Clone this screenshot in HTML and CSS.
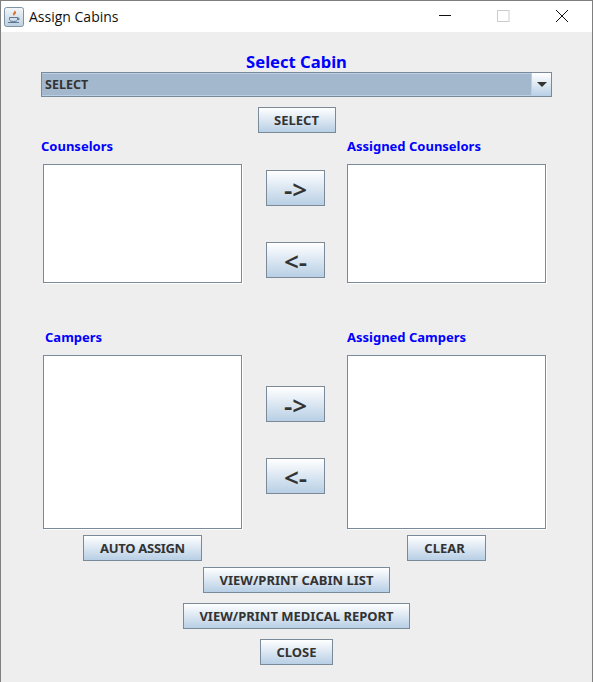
FILE: index.html
```html
<!DOCTYPE html>
<html lang="en">
<head>
<meta charset="utf-8">
<title>Assign Cabins</title>
<link rel="stylesheet" href="styles.css">
</head>
<body>
<div class="window">
  <header class="titlebar">
    <svg class="app-icon" width="20" height="20" viewBox="0 0 20 20">
      <defs><linearGradient id="ig" x1="0" y1="0" x2="0" y2="1"><stop offset="0" stop-color="#f4f7fa"/><stop offset="1" stop-color="#bccfe0"/></linearGradient></defs>
      <rect x=".5" y=".5" width="19" height="19" rx="2" fill="url(#ig)" stroke="#7d93a6"/>
      <path d="M10.500 3c1 1.500-2 2.500-1.500 4.500.2.700.7 1 1 1.500-.2-1.200 2.800-2 2-4-.3-.7-1-1.300-1.500-2z" fill="#e2762a"/>
      <path d="M5.500 10.500h8v1.800c0 1.500-1.500 2.200-4 2.200s-4-.7-4-2.200z" fill="none" stroke="#5c7a92" stroke-width="1"/>
      <path d="M13.500 11h1.500v1.500h-1.500M4 15.500h11" fill="none" stroke="#5c7a92" stroke-width="1"/>
    </svg>
    <span class="title">Assign Cabins</span>
    <div class="controls">
      <svg class="ctl" width="58" height="32" viewBox="0 0 58 32"><path d="M23 15.500h12" stroke="#111" fill="none"/></svg>
      <svg class="ctl" width="58" height="32" viewBox="0 0 58 32"><rect x="23.500" y="10.500" width="11.500" height="11" fill="none" stroke="#ccc"/></svg>
      <svg class="ctl" width="58" height="32" viewBox="0 0 58 32"><path d="M24 10l12 12M36 10l-12 12" stroke="#111" fill="none"/></svg>
    </div>
  </header>
  <main class="content">
    <h1 class="heading">Select Cabin</h1>
    <div class="combo">
      <div class="combo-value">SELECT</div>
      <div class="combo-arrow"><span class="triangle"></span></div>
    </div>
    <div class="center-row select-row"><button class="btn btn-select">SELECT</button></div>

    <section class="transfer transfer-top">
      <div class="label label-left">Counselors</div>
      <div class="label label-right">Assigned Counselors</div>
      <div class="list list-short"></div>
      <div class="arrows arrows-top">
        <button class="btn btn-arrow">-&gt;</button>
        <button class="btn btn-arrow">&lt;-</button>
      </div>
      <div class="list list-short"></div>
    </section>

    <section class="transfer transfer-bottom">
      <div class="label label-left label-campers">Campers</div>
      <div class="label label-right">Assigned Campers</div>
      <div class="list list-tall"></div>
      <div class="arrows arrows-bottom">
        <button class="btn btn-arrow">-&gt;</button>
        <button class="btn btn-arrow">&lt;-</button>
      </div>
      <div class="list list-tall"></div>
    </section>

    <div class="assign-row">
      <button class="btn btn-auto">AUTO ASSIGN</button>
      <button class="btn btn-clear">CLEAR</button>
    </div>
    <div class="center-row cabin-row"><button class="btn btn-cabin">VIEW/PRINT CABIN LIST</button></div>
    <div class="center-row stack-row"><button class="btn btn-medical">VIEW/PRINT MEDICAL REPORT</button></div>
    <div class="center-row stack-row"><button class="btn btn-close">CLOSE</button></div>
  </main>
</div>
</body>
</html>
```
FILE: styles.css
```css
* { box-sizing: border-box; }
html, body { margin: 0; padding: 0; }
body { width: 593px; height: 682px; overflow: hidden; background: #eeeeee; }

.window {
  width: 593px;
  height: 682px;
  display: flex;
  flex-direction: column;
  border: 1px solid #7f7f7f;
  border-bottom: 0;
  background: #eeeeee;
}

.titlebar {
  height: 31px;
  flex: none;
  display: flex;
  align-items: center;
  background: #ffffff;
  padding-left: 3px;
}
.app-icon { flex: none; }
.title {
  margin-left: 5px;
  font: 14px "Open Sans", "Noto Sans", sans-serif;
  color: #111;
}
.controls { margin-left: auto; margin-right: 2px; display: flex; height: 31px; }
.ctl { display: block; margin-top: -1px; }

.content {
  flex: 1;
  display: flex;
  flex-direction: column;
  font-family: "Noto Sans", sans-serif;
  font-weight: bold;
}

.heading {
  margin: 20px 0 0;
  height: 20px;
  line-height: 20px;
  text-align: center;
  font-size: 16.6px;
  font-weight: bold;
  color: #0000ff;
  font-family: "Noto Sans", sans-serif;
}

.combo {
  margin: 0 0 0 40px;
  width: 511px;
  height: 25px;
  display: flex;
  border: 1px solid #7a8a99;
  background: #a3b8cc;
}
.combo-value {
  flex: 1;
  padding-left: 3px;
  line-height: 22px;
  font-size: 12.5px;
  color: #333333;
  border: 1px solid #b8cfe5;
  border-width: 1px 0 1px 0;
}
.combo-arrow {
  width: 20px;
  display: flex;
  align-items: center;
  justify-content: center;
  border-left: 1px solid #b8cfe5;
  background: linear-gradient(#ffffff, #dde8f3 50%, #b8cfe5);
}
.triangle {
  width: 0;
  height: 0;
  border-left: 5px solid transparent;
  border-right: 5px solid transparent;
  border-top: 5px solid #333333;
}

.center-row { display: flex; justify-content: center; }
.select-row { margin-top: 10px; }
.cabin-row { margin-top: 6px; }
.stack-row { margin-top: 10px; }

.btn {
  display: block;
  height: 26px;
  padding: 0;
  border: 1px solid #7a8a99;
  background: linear-gradient(#ffffff, #e6eef6 35%, #b8cfe5);
  color: #333333;
  font-family: "Noto Sans", sans-serif;
  font-weight: bold;
  font-size: 13px;
  text-align: center;
}
.btn-select { width: 78px; }
.btn-auto { width: 119px; letter-spacing: -0.3px; }
.btn-clear { width: 79px; padding-right: 4px; }
.btn-cabin { width: 187px; }
.btn-medical { width: 227px; }
.btn-close { width: 73px; }
.btn-arrow { width: 59px; height: 36px; font-size: 26px; font-weight: 600; line-height: 30px; padding-top: 2px; }

.transfer {
  display: grid;
  margin-left: 42px;
  width: 505px;
  grid-template-columns: 199px 105px 199px;
}
.transfer-top { margin-top: 4px; }
.transfer-bottom { margin-top: 46px; }

.label {
  height: 18px;
  font-size: 13px;
  color: #0000ff;
  white-space: nowrap;
}
.transfer-top .label { line-height: 18px; }
.transfer-bottom .label { line-height: 16px; }
.label-left { grid-column: 1 / 3; margin-left: -2px; }
.label-right { grid-column: 3; }
.label-campers { margin-left: 2px; }

.list {
  background: #ffffff;
  border: 1px solid #7a8a99;
  box-shadow: 1px 1px 0 #ffffff;
  width: 199px;
}
.transfer-top .list { margin-top: 9px; }
.transfer-bottom .list { margin-top: 8px; }
.list-short { height: 119px; }
.list-tall { height: 174px; }

.arrows {
  display: flex;
  flex-direction: column;
  gap: 36px;
  align-items: flex-start;
  padding-left: 24px;
}
.arrows-top { padding-top: 15px; }
.arrows-bottom { padding-top: 39px; }

.assign-row {
  margin-top: 6px;
  margin-left: 82px;
  display: flex;
  gap: 205px;
}
```
